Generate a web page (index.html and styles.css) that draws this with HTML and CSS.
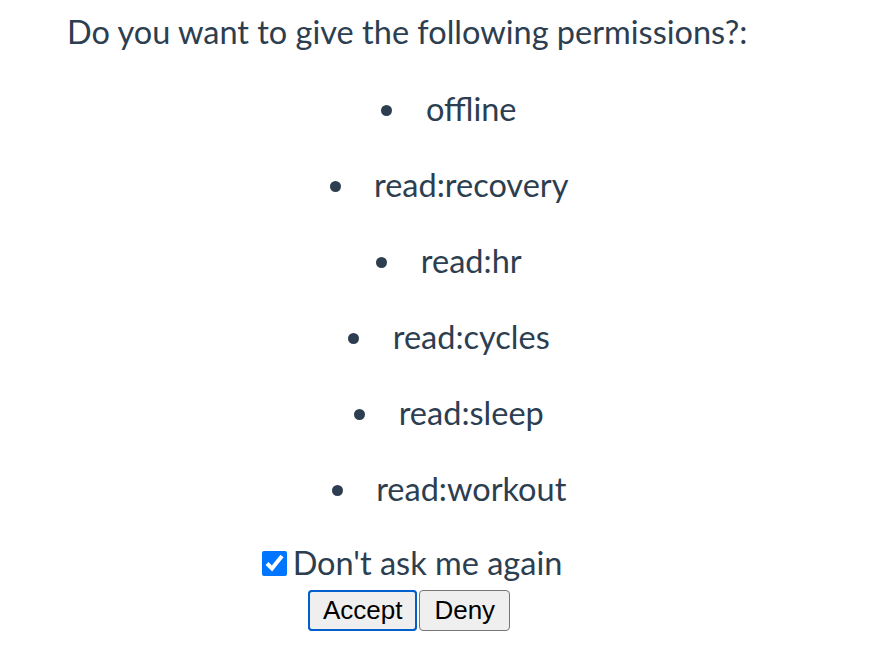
FILE: index.html
```html
<!DOCTYPE html>
<html lang="en">
<head>
    <meta charset="UTF-8">
    <meta name="viewport" content="width=device-width, initial-scale=1.0">
    <title>Permissions</title>
    <link rel="stylesheet" href="styles.css">
</head>
<body>
    <div id="app">
        <p class="question">Do you want to give the following permissions?:</p>
        <ul class="scopes">
            <li>offline</li>
            <li>read:recovery</li>
            <li>read:hr</li>
            <li>read:cycles</li>
            <li>read:sleep</li>
            <li>read:workout</li>
        </ul>
        <form class="consent">
            <label class="remember">
                <input type="checkbox" checked>
                <span>Don't ask me again</span>
            </label>
            <div class="actions">
                <button type="submit" class="accept">Accept</button><button type="button">Deny</button>
            </div>
        </form>
    </div>
</body>
</html>
```

FILE: styles.css
```css
body {
    margin: 8px;
    background: #fff;
}
#app {
    font-family: Lato, "Open Sans", sans-serif;
    color: #2c3e50;
    font-size: 32.5px;
}
.question {
    margin: 4px 0 0 59px;
    line-height: 40px;
}
.scopes {
    list-style-position: inside;
    text-align: center;
    margin: 39px 0 0;
    padding-left: 26px;
}
.scopes li {
    line-height: 36px;
    margin-bottom: 40px;
}
.consent {
    display: flex;
    flex-direction: column;
    align-items: center;
    margin-top: 5px;
    padding-right: 44px;
}
.remember {
    display: flex;
    align-items: center;
    gap: 6px;
    line-height: 32px;
    margin-left: -4px;
}
.remember input {
    width: 25px;
    height: 25px;
    margin: 0;
    accent-color: #0075ff;
}
.actions {
    display: flex;
    gap: 2px;
    margin-top: 11px;
    margin-right: 10px;
}
.actions button {
    font-family: "Liberation Sans", Arial, sans-serif;
    font-size: 26px;
    color: #000;
    background: #efefef;
    border: 1px solid #767676;
    border-radius: 4px;
    padding: 0 14px;
    height: 41px;
}
.actions .accept {
    border: 2px solid #005fcc;
    outline: 1px solid #005fcc;
    outline-offset: -1px;
    padding: 0 13px;
}
```
